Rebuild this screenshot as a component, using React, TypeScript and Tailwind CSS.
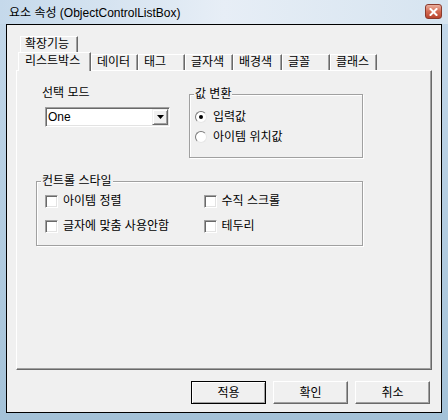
import React from "react";

const tabsTop = ["확장기능"];
const tabsBottom = [
  { label: "데이터", w: "w-[47px]" },
  { label: "태그", w: "w-[47px]" },
  { label: "글자색", w: "w-[48px]" },
  { label: "배경색", w: "w-[49px]" },
  { label: "글꼴", w: "w-[48px]" },
  { label: "클래스", w: "w-[47px]" },
];

function Radio({ checked }: { checked?: boolean }) {
  return (
    <span className="w-[12px] h-[12px] rounded-full bg-white border border-t-[#7a7a7a] border-l-[#7a7a7a] border-r-[#e6e6e6] border-b-[#e6e6e6] flex items-center justify-center shrink-0">
      {checked && <span className="w-[4px] h-[4px] rounded-full bg-black" />}
    </span>
  );
}

function Check() {
  return (
    <span className="w-[13px] h-[13px] bg-white border border-t-[#a0a0a0] border-l-[#a0a0a0] border-r-white border-b-white shadow-[inset_1px_1px_0_#696969,inset_-1px_-1px_0_#e3e3e3] shrink-0" />
  );
}

function CheckRow({ label }: { label: string }) {
  return (
    <div className="flex items-center gap-[5px] w-[160px]">
      <Check />
      <span>{label}</span>
    </div>
  );
}

function Button({ label, isDefault }: { label: string; isDefault?: boolean }) {
  return isDefault ? (
    <button className="w-[75px] h-[23px] border border-black bg-[#f0f0f0] shadow-[inset_1px_1px_0_#fff,inset_-1px_-1px_0_#a0a0a0] flex items-center justify-center">
      {label}
    </button>
  ) : (
    <button className="w-[75px] h-[23px] border border-t-white border-l-white border-r-[#696969] border-b-[#696969] bg-[#f0f0f0] shadow-[inset_-1px_-1px_0_#a0a0a0] flex items-center justify-center">
      {label}
    </button>
  );
}

export default function App() {
  return (
    <div className="w-[448px] h-[420px] flex flex-col bg-gradient-to-b from-[#c4d8ea] to-[#a4c2d8] text-[12px] leading-[14px] text-black font-['Liberation_Sans','Noto_Sans_CJK_KR',sans-serif]">
      {/* Title bar */}
      <div className="h-[24px] flex items-start pl-[9px] pr-[6px] pt-[4px] bg-gradient-to-r from-[#c5d9eb] via-[#e7eef6] to-[#d6e4f0]">
        <span className="mt-[2px]">요소 속성 (ObjectControlListBox)</span>
        <div className="ml-auto w-[17px] h-[15px] rounded-[3px] border border-[#8b3b2d] bg-gradient-to-b from-[#eab0a0] via-[#d36a52] to-[#b8432d] flex items-center justify-center">
          <svg width="9" height="8" viewBox="0 0 9 8">
            <path d="M1.5 1 L7.5 7 M7.5 1 L1.5 7" stroke="#fff" strokeWidth="2" strokeLinecap="square" />
          </svg>
        </div>
      </div>

      {/* Client area */}
      <div className="flex-1 mx-[6px] mb-[7px] border border-black bg-[#f0f0f0] flex flex-col">
        {/* Tabs, first row */}
        <div className="flex pl-[13px] mt-[11px]">
          {tabsTop.map((t) => (
            <div key={t} className="w-[58px] h-[16px] pl-[4px] border border-b-0 border-t-white border-l-white border-r-[#696969] shadow-[inset_-1px_0_0_#a0a0a0]">
              {t}
            </div>
          ))}
        </div>
        {/* Tabs, second row */}
        <div className="flex items-end pl-[11px] h-[18px]">
          <div className="relative z-10 -mb-px w-[73px] h-[19px] pl-[6px] pt-[1px] bg-[#f0f0f0] border border-b-0 border-t-white border-l-white border-r-[#696969] shadow-[inset_-1px_0_0_#a0a0a0]">
            리스트박스
          </div>
          {tabsBottom.map((t) => (
            <div key={t.label} className={`${t.w} h-[16px] pl-[5px] border border-b-0 border-t-white border-l-white border-r-[#696969] shadow-[inset_-1px_0_0_#a0a0a0]`}>
              {t.label}
            </div>
          ))}
        </div>

        {/* Tab panel */}
        <div className="ml-[9px] w-[416px] h-[300px] border border-t-white border-l-white border-r-[#696969] border-b-[#696969] shadow-[inset_-1px_-1px_0_#a0a0a0] pl-[19px] pt-[15px]">
          <div className="flex items-start">
            <div className="w-[153px] flex flex-col">
              <span className="ml-[6px]">선택 모드</span>
              <div className="ml-[9px] mt-[7px] w-[125px] h-[20px] border border-t-[#a0a0a0] border-l-[#a0a0a0] border-r-white border-b-white shadow-[inset_1px_1px_0_#696969,inset_-1px_-1px_0_#e3e3e3] bg-white p-[1px] flex items-center">
                <span className="flex-1 pl-[1px]">One</span>
                <span className="w-[16px] h-[16px] bg-[#f0f0f0] border border-t-[#f0f0f0] border-l-[#f0f0f0] border-r-[#696969] border-b-[#696969] shadow-[inset_1px_1px_0_#fff,inset_-1px_-1px_0_#a0a0a0] flex items-center justify-center">
                  <svg width="7" height="4" viewBox="0 0 7 4">
                    <path d="M0 0 H7 L3.5 4 Z" fill="#000" />
                  </svg>
                </span>
              </div>
            </div>
            <div className="relative mt-[8px] w-[174px] h-[64px] border border-[#a0a0a0] shadow-[inset_1px_1px_0_#fff,1px_1px_0_#fff] pl-[5px] pt-[12px]">
              <span className="absolute -top-[8px] left-[4px] px-[1px] bg-[#f0f0f0]">값 변환</span>
              <div className="h-[20px] flex items-center gap-[6px]">
                <Radio checked />
                <span>입력값</span>
              </div>
              <div className="h-[20px] flex items-center gap-[6px]">
                <Radio />
                <span>아이템 위치값</span>
              </div>
            </div>
          </div>

          <div className="relative mt-[23px] w-[327px] h-[65px] border border-[#a0a0a0] shadow-[inset_1px_1px_0_#fff,1px_1px_0_#fff] pl-[8px] pt-[9px] flex flex-col gap-[5px]">
            <span className="absolute -top-[8px] left-[4px] px-[1px] bg-[#f0f0f0]">컨트롤 스타일</span>
            <div className="h-[20px] flex items-center">
              <CheckRow label="아이템 정렬" />
              <CheckRow label="수직 스크롤" />
            </div>
            <div className="h-[20px] flex items-center">
              <CheckRow label="글자에 맞춤 사용안함" />
              <CheckRow label="테두리" />
            </div>
          </div>
        </div>

        {/* Buttons */}
        <div className="mt-[11px] flex justify-end gap-[7px] pr-[11px]">
          <Button label="적용" isDefault />
          <Button label="확인" />
          <Button label="취소" />
        </div>
      </div>
    </div>
  );
}
